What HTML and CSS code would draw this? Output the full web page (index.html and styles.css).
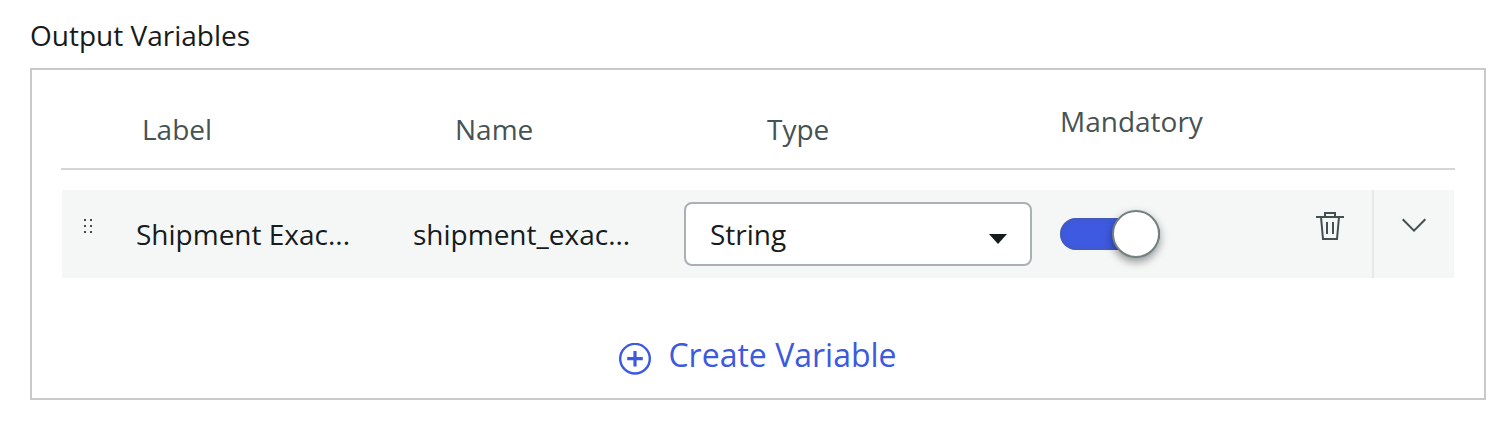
FILE: index.html
```html
<!DOCTYPE html>
<html lang="en">
<head>
<meta charset="utf-8">
<title>Output Variables</title>
<link rel="stylesheet" href="styles.css">
</head>
<body>
<main class="section">
  <h1 class="section-title">Output Variables</h1>
  <div class="panel">
    <div class="table-head">
      <span class="head-label">Label</span>
      <span class="head-name">Name</span>
      <span class="head-type">Type</span>
      <span class="head-mandatory">Mandatory</span>
    </div>
    <div class="row">
      <div class="drag-handle"><svg width="8" height="14" viewBox="0 0 8 14" fill="#3f4b4d"><path d="M0 0h2v2H0zM6 0h2v2H6zM0 6h2v2H0zM6 6h2v2H6zM0 12h2v2H0zM6 12h2v2H6z"/></svg></div>
      <span class="cell-label">Shipment Exac...</span>
      <span class="cell-name">shipment_exac...</span>
      <div class="select" role="combobox" aria-label="Type">
        <span class="select-value">String</span>
        <svg class="caret" width="18" height="10" viewBox="0 0 18 10"><path d="M0 0h18L9 10z" fill="#161b1c"/></svg>
      </div>
      <div class="toggle" role="switch" aria-checked="true" aria-label="Mandatory"><span class="knob"></span></div>
      <div class="delete"><svg width="28" height="28" viewBox="0 0 28 28" fill="none" stroke="#43504f" stroke-width="2"><path d="M0 5h28M9 5V1h10v4M5 5l2 22h14l2-22M11 10v12M17 10v12"/></svg></div>
      <div class="expand"><svg width="24" height="14" viewBox="0 0 24 14" fill="none" stroke="#43504f" stroke-width="2"><path d="M.7 1.3L12 12.6 23.3 1.3"/></svg></div>
    </div>
    <div class="create">
      <svg class="plus" width="32" height="32" viewBox="0 0 32 32" fill="none" stroke="#3c59e0"><circle cx="16" cy="15.7" r="14.8" stroke-width="2.4"/><path d="M8.2 15.7h15.6M16 7.9v15.6" stroke-width="3.2"/></svg>
      <span>Create Variable</span>
    </div>
  </div>
</main>
</body>
</html>
```
FILE: styles.css
```css
* { box-sizing: border-box; }

body {
  margin: 0;
  background: #fff;
  color: #161b1c;
  font-family: "Open Sans", "Noto Sans", sans-serif;
  font-size: 28px;
  line-height: 38px;
}

svg { display: block; }

.section { padding: 16px 26px 30px 30px; }

.section-title {
  margin: 0 0 14px;
  font-size: 28px;
  font-weight: 400;
}

.panel {
  height: 332px;
  padding: 0 29px;
  border: 2px solid #c8c9ca;
}

.table-head {
  display: grid;
  grid-template-columns: 313px 312px 293px 1fr;
  height: 100px;
  padding: 40px 0 0 81px;
  border-bottom: 2px solid #d2d6d6;
  color: #465352;
}

.head-mandatory { margin-top: -8px; }

.row {
  display: grid;
  grid-template-columns: 74px 277px 271px 348px 28px 1fr 56px 82px;
  height: 88px;
  margin: 20px 1px 0;
  background: #f5f7f7;
}

.drag-handle { padding: 29px 0 0 22px; }
.cell-label, .cell-name { padding-top: 25px; }

.select {
  display: flex;
  align-items: center;
  justify-content: space-between;
  height: 64px;
  margin-top: 12px;
  padding: 0 23px 0 24px;
  border: 2px solid #aab0b4;
  border-radius: 8px;
  background: #fff;
}

.caret { margin-top: 10px; }

.toggle {
  grid-column: 6;
  display: flex;
  align-items: center;
  justify-content: flex-end;
  width: 100px;
  height: 32px;
  margin-top: 28px;
  border-radius: 16px;
  background: #3e5ae0;
  box-shadow: inset 0 0 5px rgba(80, 90, 120, .75);
}

.knob {
  width: 48px;
  height: 48px;
  border: 2px solid #748081;
  border-radius: 50%;
  background: #fff;
  box-shadow: 0 4px 8px rgba(0, 0, 0, .4);
}

.delete { padding-top: 22px; }

.expand {
  padding: 28px 0 0 28px;
  border-left: 2px solid #e6e9e9;
}

.create {
  display: flex;
  align-items: center;
  justify-content: center;
  gap: 17px;
  padding-top: 55px;
  color: #3c59e0;
  font-size: 32px;
  line-height: 44px;
}

.plus { margin-top: 7px; }
```
